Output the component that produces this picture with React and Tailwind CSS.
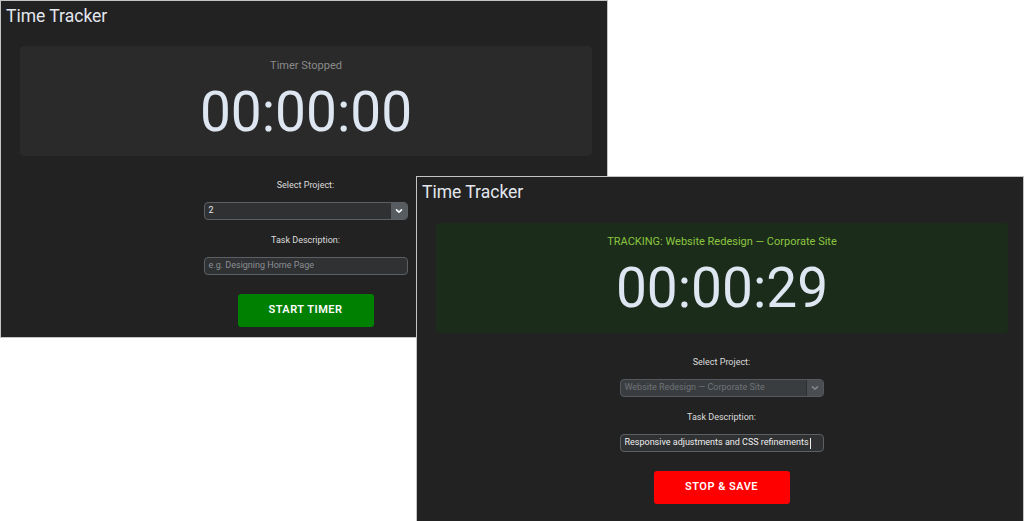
const Chevron = ({ color }) => (
  <svg width="8" height="6" viewBox="0 0 8 6" fill="none">
    <path d="M1.5 1.8 L4 4.2 L6.5 1.8" stroke={color} strokeWidth="1.6" strokeLinecap="round" strokeLinejoin="round" />
  </svg>
);

const TrackerPanel = ({ tracking }) => {
  return (
    <div className="w-full h-full bg-[#222222] border border-[#c4c4c4] flex flex-col px-[5px] pt-[4px]">
      <h1 className="text-[17.5px] leading-[22px] text-[#e2e7ee]">Time Tracker</h1>

      <div
        className={
          tracking
            ? "mt-[20px] ml-[14px] w-[572px] h-[110px] rounded-[4px] bg-[#1b2c1b] flex flex-col items-center pt-[11px]"
            : "mt-[19px] ml-[14px] w-[572px] h-[110px] rounded-[4px] bg-[#2a2a2a] flex flex-col items-center pt-[12px]"
        }
      >
        <p className={tracking ? "text-[11px] leading-[16px] text-[#8cc63f]" : "text-[11px] leading-[16px] text-[#8a8a8a]"}>
          {tracking ? "TRACKING: Website Redesign — Corporate Site" : "Timer Stopped"}
        </p>
        <div className="mt-[10px] text-[55px] leading-[56px] text-[#dde6f1]">
          {tracking ? "00:00:29" : "00:00:00"}
        </div>
      </div>

      <div className="flex flex-col items-center pl-[3px]">
        <label className="mt-[23px] text-[9px] leading-[12px] text-[#dddddd]">Select Project:</label>
        <div
          className={
            tracking
              ? "mt-[11px] w-[204px] h-[18px] rounded-[4px] border border-[#55595d] bg-[#3a3d40] flex items-center overflow-hidden"
              : "mt-[11px] w-[204px] h-[18px] rounded-[4px] border border-[#5c6064] bg-[#2f3133] flex items-center overflow-hidden"
          }
        >
          <span className={tracking ? "flex-1 pl-[4px] text-[9px] text-[#6f7377]" : "flex-1 pl-[4px] text-[9px] text-[#e6e6e6]"}>
            {tracking ? "Website Redesign — Corporate Site" : "2"}
          </span>
          <span
            className={
              tracking
                ? "w-[17px] h-full bg-[#4a4e52] border-l border-[#2e3033] flex items-center justify-center"
                : "w-[17px] h-full bg-[#575c61] border-l border-[#2e3033] flex items-center justify-center"
            }
          >
            <Chevron color={tracking ? "#80858a" : "#ffffff"} />
          </span>
        </div>

        <label className="mt-[14px] text-[9px] leading-[12px] text-[#dddddd]">Task Description:</label>
        <div className="mt-[11px] w-[204px] h-[18px] rounded-[4px] border border-[#5c6064] bg-[#2f3133] flex items-center pl-[4px]">
          {tracking ? (
            <span className="flex items-center text-[9px] text-[#eeeeee]">
              Responsive adjustments and CSS refinements
              <span className="ml-[1px] w-px h-[11px] bg-[#eeeeee]" />
            </span>
          ) : (
            <span className="text-[9px] text-[#8b8f93]">e.g. Designing Home Page</span>
          )}
        </div>

        <button
          className={
            tracking
              ? "mt-[19px] w-[136px] h-[33px] rounded-[3px] bg-[#ff0000] text-white text-[11px] font-semibold tracking-[0.5px]"
              : "mt-[19px] w-[136px] h-[33px] rounded-[3px] bg-[#008000] text-white text-[11px] font-semibold tracking-[0.5px]"
          }
        >
          {tracking ? "STOP & SAVE" : "START TIMER"}
        </button>
      </div>
    </div>
  );
};

export default function App() {
  return (
    <div className="relative w-[1024px] h-[521px] bg-white overflow-hidden font-['Roboto',sans-serif]">
      <div className="absolute left-0 top-0 w-[608px] h-[338px]">
        <TrackerPanel tracking={false} />
      </div>
      <div className="absolute left-[416px] top-[176px] w-[608px] h-[352px]">
        <TrackerPanel tracking={true} />
      </div>
    </div>
  );
}
